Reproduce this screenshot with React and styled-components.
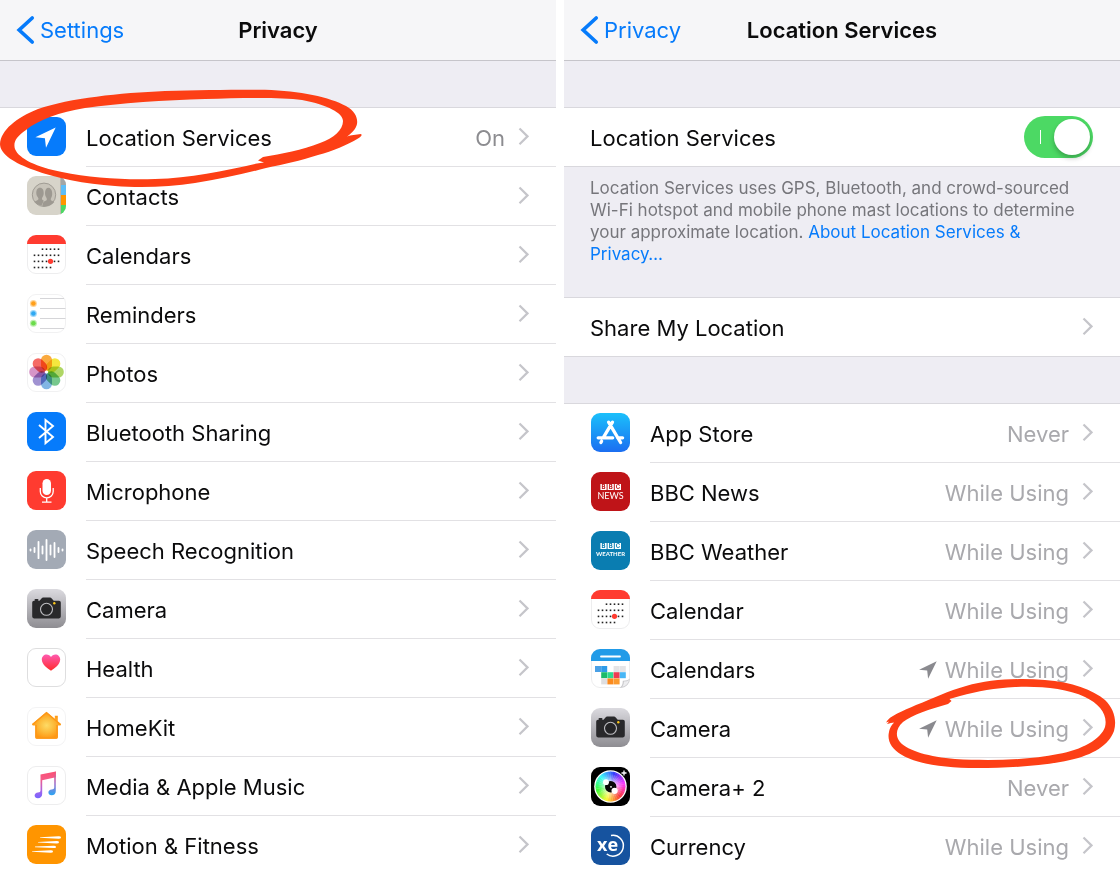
import React from "react";
import styled, { createGlobalStyle } from "styled-components";

const GlobalStyle = createGlobalStyle`
  *, *::before, *::after { box-sizing: border-box; }
  body {
    margin: 0;
    background: #fff;
    color: #0b0b0c;
    font-family: Inter, "Liberation Sans", sans-serif;
    font-size: 22px;
    line-height: 28px;
  }
  ul { list-style: none; margin: 0; padding: 0; }
  p, h1 { margin: 0; }
  a { color: inherit; text-decoration: none; }
`;

const Screens = styled.div`
  display: grid;
  grid-template-columns: 1fr 1fr;
  gap: 8px;
  min-height: 100vh;
  overflow: hidden;
`;

const Panel = styled.section`
  display: flex;
  flex-direction: column;
  min-width: 0;
`;

const NavBar = styled.header`
  display: grid;
  grid-template-columns: 1fr auto 1fr;
  align-items: center;
  height: 61px;
  padding: 0 16px;
  background: #f6f6f8;
  border-bottom: 1px solid #c6c5ca;
`;

const BackLink = styled.a`
  display: flex;
  align-items: center;
  gap: 5px;
  color: #067bfb;
`;

const NavTitle = styled.h1`
  font-size: 22px;
  font-weight: 600;
  line-height: 28px;
`;

const Spacer = styled.div`
  height: 46px;
  background: #eeedf3;
`;

const Group = styled.ul`
  border-top: 1px solid #d9d8dd;
  border-bottom: ${(p) => (p.$open ? "0" : "1px solid #d9d8dd")};
  background: #fff;
`;

const Item = styled.li`
  position: relative;
`;

const rowBase = `
  display: flex;
  height: 59px;
`;

const RowLink = styled.a`
  ${rowBase}
  padding-left: ${(p) => (p.$plain ? 26 : 27)}px;
  li:last-child > & { height: 58px; }
`;

const SwitchRow = styled.label`
  ${rowBase}
  height: 58px;
  padding-left: 26px;
`;

const IconBox = styled.svg`
  flex: none;
  width: 39px;
  height: 39px;
  margin: 9px 20px 0 0;
`;

const RowBody = styled.span`
  display: flex;
  flex: 1;
  align-items: center;
  min-width: 0;
  padding-right: 27px;
  border-bottom: 1px solid #e2e1e4;
  li:last-child & { border-bottom: 0; }
`;

const Label = styled.span`
  flex: 1;
  padding-top: 2px;
  white-space: nowrap;
`;

const Value = styled.span`
  display: flex;
  align-items: center;
  gap: 8px;
  margin-right: 13px;
  padding-top: 2px;
  color: ${(p) => (p.$soft ? "#a9a9ad" : "#8c8c90")};
  white-space: nowrap;
`;

const Switch = styled.input`
  appearance: none;
  position: relative;
  flex: none;
  width: 69px;
  height: 42px;
  margin: 0;
  border-radius: 21px;
  background: #4cd964;
  &::before {
    content: "";
    position: absolute;
    top: 14px;
    left: 16px;
    width: 1px;
    height: 14px;
    background: #fff;
  }
  &::after {
    content: "";
    position: absolute;
    top: 3px;
    right: 3px;
    width: 36px;
    height: 36px;
    border-radius: 50%;
    background: #fff;
    box-shadow: 0 3px 5px rgba(0, 0, 0, 0.25);
  }
  &:not(:checked) { background: #d1d1d6; }
  &:not(:checked)::after { right: 30px; }
`;

const Note = styled.p`
  height: 130px;
  padding: 10px 26px 0;
  background: #eeedf3;
  color: #76767b;
  font-size: 17px;
  line-height: 22px;
  a { color: #067bfb; }
`;

const Mark = styled.svg`
  position: absolute;
  z-index: 1;
  pointer-events: none;
  fill: #fd3f15;
  overflow: visible;
`;

const LeftMark = styled(Mark)`
  top: -20px;
  left: 0;
`;

const RightMark = styled(Mark)`
  top: -24px;
  right: 0;
`;

const BackArrow = () => (
  <svg width="19" height="30" viewBox="0 0 19 30" fill="none" aria-hidden="true">
    <path d="M16.2 3 3.2 15l13 12" stroke="#067bfb" strokeWidth="3.700" strokeLinecap="round" />
  </svg>
);

const Chevron = () => (
  <svg width="11" height="20" viewBox="0 0 11 20" fill="none" aria-hidden="true">
    <path d="M1.5 1.5 9.5 9.4 1.5 17.3" stroke="#c5c5ca" strokeWidth="2.2" />
  </svg>
);

const SmallArrow = () => (
  <svg width="18" height="18" viewBox="0 0 18 18" aria-hidden="true">
    <path d="M17.7.2.1 8.7l8.1.9.9 8.2z" fill="#8a8a8f" />
  </svg>
);

const White = ({ stroke = "#ededee" }) => (
  <rect x=".5" y=".5" width="38" height="38" rx="8.5" fill="#fff" stroke={stroke} />
);
const Tile = ({ fill }) => <rect width="39" height="39" rx="9" fill={fill} />;

const LocationIcon = () => (
  <>
    <Tile fill="#067bfb" />
    <path d="M28.7 10.4 8.4 20.2l9.5 1 1.1 9.6z" fill="#fff" />
  </>
);

const ContactsIcon = () => (
  <>
    <clipPath id="contactsClip"><rect width="39" height="39" rx="9" /></clipPath>
    <g clipPath="url(#contactsClip)">
      <rect width="39" height="39" fill="#d7d4ca" />
      <path d="M34 0h5v9h-5z" fill="#a3a6a5" />
      <path d="M34 9h5v10h-5z" fill="#5dbdf7" />
      <path d="M34 19h5v10h-5z" fill="#ff9500" />
      <path d="M34 29h5v10h-5z" fill="#4cd964" />
      <path d="M33 0h1v39h-1z" fill="#bbb7ad" />
    </g>
    <circle cx="17" cy="18.8" r="11.7" fill="#c8c4ba" stroke="#a09c94" strokeWidth="1" />
    <g fill="#9d9991">
      <path d="M7.500 26c1.500-1.600 3.800-1.600 4-3 .2-1.500-2.200-2.500-2.200-6 0-3 1-5.300 3.700-5.300s3.700 2.300 3.700 5.300c0 3.500-1.900 4.500-1.700 6 .1.900.9 1.200 1.800 1.700l-2.300 4.800c-2.800-.3-5.200-1.500-7-3.500z" />
      <path d="M15.500 30c0-3.700 1.500-4.500 3.200-5.200 1.600-.6 1.400-2.300.3-3.800-1.500-2-1.600-9.300 2.400-9.300s4.500 7 3.200 9.300c-1 1.700-1.300 3.200.2 3.800l2.500 1.200c-2.400 3.400-6.900 4.800-11.800 4z" />
    </g>
  </>
);

const calendarRows = [
  [15, 19, 23, 27, 31],
  [7, 11, 15, 19, 23, 27, 31],
  [7, 11, 15, 19, 27, 31],
  [7, 11, 15, 19, 23],
];

const CalendarIcon = () => (
  <>
    <White />
    <path d="M0 9a9 9 0 0 1 9-9h21a9 9 0 0 1 9 9z" fill="#ff3b30" />
    {calendarRows.map((xs, row) =>
      xs.map((x) => (
        <rect key={`${row}-${x}`} x={x - 0.3} y={13.4 + row * 6.1} width="1.6" height="1.6" fill="#222" />
      ))
    )}
    <circle cx="23.500" cy="26.300" r="2.600" fill="#ff3b30" />
  </>
);

const RemindersIcon = () => (
  <>
    <White stroke="#f1f1f2" />
    <path d="M13 4.500h24M13 14.500h25.500M13 24.500h25.500M13 34.500h24" stroke="#d5d5d8" />
    {[["#ff9f1a", 9.5], ["#30a9f2", 19.5], ["#6bdc4b", 29.3]].map(([color, y]) => (
      <g key={color} fill={color}>
        <circle cx="6.400" cy={y} r="3.500" opacity=".45" />
        <circle cx="6.400" cy={y} r="2.300" />
      </g>
    ))}
  </>
);

const petals = ["#f99b1d", "#f2e31c", "#a1cf4a", "#5fbf79", "#6ba8e0", "#8f7fc9", "#cf82bd", "#f4504a"];

const PhotosIcon = () => (
  <>
    <White stroke="#f1f1f2" />
    <g style={{ isolation: "isolate" }}>
      {petals.map((color, i) => (
        <rect
          key={color}
          x="14" y="1.700" width="11" height="16" rx="5.500"
          fill={color} opacity=".85"
          transform={`rotate(${i * 45} 19.500 19)`}
          style={{ mixBlendMode: "multiply" }}
        />
      ))}
    </g>
    <circle cx="19.500" cy="19" r="1.300" fill="#fff" />
  </>
);

const BluetoothIcon = () => (
  <>
    <Tile fill="#067bfb" />
    <path d="m12 13 14 12-7.500 6.200V8L26 14 12 26" fill="none" stroke="#fff" strokeWidth="1.900" />
  </>
);

const MicrophoneIcon = () => (
  <>
    <Tile fill="#ff3b30" />
    <rect x="15.500" y="8" width="8.500" height="16" rx="4.250" fill="#fff" />
    <path d="M13.300 17v3.500a6.450 6.450 0 0 0 12.900 0V17M19.700 27v4M15 31.200h9.500" fill="none" stroke="#fff" strokeWidth="1.300" />
  </>
);

const bars = [[3.5, 0.6], [7.5, 2], [11.5, 8.2], [15.5, 3.6], [19.5, 10], [23.5, 4.6], [27.5, 7], [31.5, 2], [35.5, 0.6]];

const SpeechIcon = () => (
  <>
    <Tile fill="#a3aab5" />
    {bars.map(([x, h]) => (
      <path key={x} d={`M${x} ${20 - h}v${h * 2}`} stroke="#fff" strokeWidth="1.800" strokeLinecap="round" />
    ))}
  </>
);

const CameraIcon = () => (
  <>
    <linearGradient id="cameraBack" x2="0" y2="1">
      <stop stopColor="#dbdadf" />
      <stop offset="1" stopColor="#8e8d92" />
    </linearGradient>
    <Tile fill="url(#cameraBack)" />
    <path d="M7 11.800h5.500l2-2.400q.7-.8 1.700-.8h6.800q1 0 1.700.8l2 2.400H32q1.800 0 1.800 1.800v14q0 1.800-1.800 1.800H7q-1.800 0-1.800-1.800v-14q0-1.800 1.800-1.800z" fill="#29292b" />
    <rect x="7.500" y="10" width="4" height="2" rx="1" fill="#29292b" />
    <circle cx="19.500" cy="20.300" r="6" fill="#242426" stroke="#bdbdc1" strokeWidth="1.100" />
    <circle cx="27.300" cy="14.200" r="1.200" fill="#f8c51a" />
  </>
);

const HealthIcon = () => (
  <>
    <linearGradient id="heartFill" x2="0" y2="1">
      <stop stopColor="#ff5ab0" />
      <stop offset="1" stopColor="#ff2b2b" />
    </linearGradient>
    <White stroke="#dededf" />
    <path d="M24 22.800c-3.300-2-9.200-6.100-9.200-11.200 0-3 2.200-5.100 4.800-5.100 1.900 0 3.500 1 4.400 2.600.9-1.600 2.500-2.600 4.400-2.600 2.600 0 4.800 2.100 4.800 5.100 0 5.100-5.900 9.200-9.200 11.200z" fill="url(#heartFill)" />
  </>
);

const HomeIcon = () => (
  <>
    <radialGradient id="homeFill">
      <stop stopColor="#fddb66" />
      <stop offset=".5" stopColor="#fcbc3c" />
      <stop offset="1" stopColor="#ff9712" />
    </radialGradient>
    <White stroke="#f3f3f4" />
    <path d="M19.500 5 5 17.300l.8 1.200h2.500V30q0 1.800 1.800 1.800h19q1.800 0 1.800-1.800V18.500h2.500l.7-1.200-3.300-2.800V8.800h-3V12z" fill="url(#homeFill)" />
    <path d="m5.500 17.500 14-11.800 14 11.800M9 18v12.200q0 .9.900.9h19.200q.9 0 .9-.9V18" fill="none" stroke="#fd9818" strokeWidth="1.500" />
  </>
);

const MusicIcon = () => (
  <>
    <linearGradient id="noteFill" x1="0" y1="0" x2="0" y2="1">
      <stop stopColor="#fb5074" />
      <stop offset=".3" stopColor="#f55c88" />
      <stop offset=".75" stopColor="#a065ed" />
      <stop offset="1" stopColor="#7565ff" />
    </linearGradient>
    <linearGradient id="noteStem" x1="0" y1="0" x2="0" y2="1">
      <stop stopColor="#f9506e" />
      <stop offset=".5" stopColor="#a373cb" />
      <stop offset="1" stopColor="#28a6f5" />
    </linearGradient>
    <White />
    <path d="M13.500 8.600 28.800 5.500v5.800l-13.600 2.900v13.500c0 2.800-1.800 4.600-4.300 4.600-1.900 0-3.300-1.100-3.300-2.700 0-1.800 1.400-2.800 3.400-3.100 1.700-.3 2.500-.6 2.500-2z" fill="url(#noteFill)" />
    <path d="M27.200 6.200 28.800 5.500v19.400c0 2.800-1.700 4.400-4.200 4.400-1.900 0-3.200-1.100-3.200-2.700 0-1.700 1.300-2.700 3.300-3 1.600-.3 2.500-.6 2.500-2z" fill="url(#noteStem)" />
  </>
);

const MotionIcon = () => (
  <>
    <Tile fill="#ff9500" />
    <g fill="#fff">
      <path d="m13 12.200 18.500-.9q2.500-.1 2.500 1.200t-2.500 1.200L13 12.800z" />
      <path d="m11 16.900 18.500-.9q2.500-.1 2.500 1.200t-2.500 1.200L11 17.500z" />
      <path d="m8 21.600 18.500-.9q2.500-.1 2.500 1.200t-2.500 1.200L8 22.200z" />
      <path d="m5 26.200 18.500-.9q2.500-.1 2.500 1.200t-2.500 1.200L5 26.800z" />
    </g>
  </>
);

const AppStoreIcon = () => (
  <>
    <linearGradient id="storeBack" x2="0" y2="1">
      <stop stopColor="#1bc0fb" />
      <stop offset="1" stopColor="#1b6ef1" />
    </linearGradient>
    <Tile fill="url(#storeBack)" />
    <path d="m21.500 9.200-9.200 15.500M10.600 28.200l-.7 1.300M17.600 9.200l12 20.300M7.200 24.800h14.500M26.600 24.800h5" fill="none" stroke="#fff" strokeWidth="3.300" strokeLinecap="round" />
  </>
);

const BbcBlocks = ({ y, color }) => (
  <>
    {["B", "B", "C"].map((letter, i) => (
      <g key={i}>
        <rect x={9.4 + i * 7.2} y={y} width="6.200" height="6" fill="#fff" />
        <text x={12.5 + i * 7.2} y={y + 5.1} fill={color} fontSize="6" fontWeight="700" textAnchor="middle" fontFamily="Inter, sans-serif">
          {letter}
        </text>
      </g>
    ))}
  </>
);

const BbcNewsIcon = () => (
  <>
    <Tile fill="#bf1418" />
    <BbcBlocks y={12} color="#bf1418" />
    <text x="19.500" y="27.300" fill="#fff" fontSize="9" fontWeight="400" textAnchor="middle" fontFamily="Lato, sans-serif">NEWS</text>
  </>
);

const BbcWeatherIcon = () => (
  <>
    <Tile fill="#0a7db1" />
    <BbcBlocks y={12} color="#0a7db1" />
    <text x="19.500" y="25" fill="#fff" fontSize="6" fontWeight="700" textAnchor="middle" fontFamily="Lato, sans-serif">WEATHER</text>
  </>
);

const blocks = [
  [4, 17, "#4aa0e6"], [10.2, 17, "#2d9be8"], [22.6, 17, "#e4e4e6"], [28.8, 17, "#e4e4e6"],
  [10.2, 23.2, "#1dbb6a"], [16.4, 23.2, "#2fd98e"], [22.6, 23.2, "#ef3c52"], [28.8, 23.2, "#48b6f5"],
  [10.2, 29.4, "#dedee0"], [16.4, 29.4, "#fb8a1e"], [22.6, 29.4, "#fb9a2e"],
];

const CalendarsAppIcon = () => (
  <>
    <White />
    <path d="M0 12V9a9 9 0 0 1 9-9h21a9 9 0 0 1 9 9v3z" fill="#219be8" />
    <path d="M10 7.500h19" stroke="#fff" strokeWidth="1.800" strokeLinecap="round" />
    {blocks.map(([x, y, color]) => (
      <rect key={`${x}-${y}`} x={x} y={y} width="6" height="6" fill={color} />
    ))}
    <path d="M38.800 29.500c-1.500 1.700-4 2.300-7 2.200 0 3.600-1 5.800-3.500 7.100H30a9 9 0 0 0 8.800-9z" fill="#c9c9cc" />
    <path d="M38.300 31q-2.500 1.600-5.300 1.600 0 3-1.700 5.400 5-1.200 7-7z" fill="#ededef" />
  </>
);

const wedge = (i, count, r) => {
  const a = (i / count) * Math.PI * 2;
  const b = ((i + 1.15) / count) * Math.PI * 2;
  return `M19.5 19.5L${19.5 + r * Math.cos(a)} ${19.5 + r * Math.sin(a)}A${r} ${r} 0 0 1 ${19.5 + r * Math.cos(b)} ${19.5 + r * Math.sin(b)}z`;
};

const CameraPlusIcon = () => (
  <>
    <radialGradient id="lensGlow">
      <stop offset=".35" stopColor="#fff" stopOpacity=".6" />
      <stop offset=".85" stopColor="#fff" stopOpacity="0" />
    </radialGradient>
    <Tile fill="#000" />
    <circle cx="19.500" cy="19.500" r="16.300" fill="#fff" />
    {Array.from({ length: 36 }, (_, i) => (
      <path key={i} d={wedge(i, 36, 15)} fill={`hsl(${(318 + i * 10) % 360} 95% 60%)`} />
    ))}
    <circle cx="19.500" cy="19.500" r="15" fill="url(#lensGlow)" />
    <circle cx="19.700" cy="19.700" r="5.700" fill="#080808" />
    <circle cx="15" cy="15.200" r="2.900" fill="#fff" />
    <circle cx="23.600" cy="23.800" r="3.100" fill="#fff" />
    <circle cx="20" cy="19.800" r=".9" fill="#fff" />
    <path d="M33 3.500v5M30.500 6h5" stroke="#fff" strokeWidth="1.300" />
  </>
);

const CurrencyIcon = () => (
  <>
    <Tile fill="#16539f" />
    <text x="6" y="24.500" fill="#fff" fontSize="18" fontWeight="700" fontFamily="'Open Sans', sans-serif">xe</text>
    <path d="M20 9.500a10.400 10.400 0 1 1-4.300 18.500" fill="none" stroke="#fff" strokeWidth="1.500" />
  </>
);

const privacyRows = [
  { label: "Location Services", icon: LocationIcon, value: "On", mark: "left" },
  { label: "Contacts", icon: ContactsIcon },
  { label: "Calendars", icon: CalendarIcon },
  { label: "Reminders", icon: RemindersIcon },
  { label: "Photos", icon: PhotosIcon },
  { label: "Bluetooth Sharing", icon: BluetoothIcon },
  { label: "Microphone", icon: MicrophoneIcon },
  { label: "Speech Recognition", icon: SpeechIcon },
  { label: "Camera", icon: CameraIcon },
  { label: "Health", icon: HealthIcon },
  { label: "HomeKit", icon: HomeIcon },
  { label: "Media & Apple Music", icon: MusicIcon },
  { label: "Motion & Fitness", icon: MotionIcon },
];

const appRows = [
  { label: "App Store", icon: AppStoreIcon, value: "Never" },
  { label: "BBC News", icon: BbcNewsIcon, value: "While Using" },
  { label: "BBC Weather", icon: BbcWeatherIcon, value: "While Using" },
  { label: "Calendar", icon: CalendarIcon, value: "While Using" },
  { label: "Calendars", icon: CalendarsAppIcon, value: "While Using", recent: true },
  { label: "Camera", icon: CameraIcon, value: "While Using", recent: true, mark: "right" },
  { label: "Camera+ 2", icon: CameraPlusIcon, value: "Never" },
  { label: "Currency", icon: CurrencyIcon, value: "While Using" },
];

const LeftCircle = () => (
  <LeftMark width="364" height="102" viewBox="0 88 364 102" aria-hidden="true">
    <path
      fillRule="evenodd"
      d="M347 136.500C351 135 356 134.500 361 134Q363 135.500 358 138.500C347 145 333 151 318 155C300 161 284 164 266 168C244 174 220 179 195 183C170 187 140 188 115 186C85 184 55 178 34 170C14 163 0 154 0 144C1 130 16 118 38 109C70 98 120 93 165 91C200 90 235 89.500 265 89.700C300 91 330 97 346 106C355 111 358 118 357 124C356 129 352 133 347 136.500Z
      M343 121C343 113 328 105 302 100C280 97 240 98 205 99C165 100 120 103 85 108C60 112 38 120 26 130C16 137 13 142 15 149C19 159 37 167 62 172C90 178 125 180 155 179C190 178 225 171 257 163.500L264 162.500L258 160.500L263 157C282 154 302 150 320 143C334 138 343 130 343 121Z"
    />
  </LeftMark>
);

const RightCircle = () => (
  <RightMark width="240" height="98" viewBox="880 675 240 98" aria-hidden="true">
    <path
      fillRule="evenodd"
      d="M887 724L889 721.500L886 722.500C889 716 903 711 916 705C934 698 948 691 966 686C990 679 1020 678 1045 680C1072 682 1093 690 1105 700C1114 709 1117 720 1114 731C1109 745 1093 755 1070 760C1043 766 1010 768 977 768C945 768 917 764 902 755C891 749 887 740 889 732C890 727 892 725 894 722.500C892 722.500 890 723.500 887 724Z
      M960 696L949.500 699L951.500 701L948 704C930 709 912 715 903 722C896 728 895 736 900 742C908 751 930 757 955 759C990 761 1030 760 1058 754C1082 750 1101 739 1105 727C1108 715 1100 704 1085 697C1066 688 1040 686 1015 687C995 688 978 691 960 696Z"
    />
  </RightMark>
);

const Row = ({ label, icon: Icon, value, recent, mark, soft }) => (
  <Item>
    <RowLink href="#" $plain={!Icon}>
      {Icon && (
        <IconBox viewBox="0 0 39 39" aria-hidden="true">
          <Icon />
        </IconBox>
      )}
      <RowBody>
        <Label>{label}</Label>
        {value && (
          <Value $soft={soft}>
            {recent && <SmallArrow />}
            {value}
          </Value>
        )}
        <Chevron />
      </RowBody>
    </RowLink>
    {mark === "left" && <LeftCircle />}
    {mark === "right" && <RightCircle />}
  </Item>
);

export default function App() {
  return (
    <>
      <GlobalStyle />
      <Screens>
        <Panel>
          <NavBar>
            <BackLink href="#"><BackArrow />Settings</BackLink>
            <NavTitle>Privacy</NavTitle>
          </NavBar>
          <Spacer />
          <Group $open>
            {privacyRows.map((row) => <Row key={row.label} {...row} />)}
          </Group>
        </Panel>
        <Panel>
          <NavBar>
            <BackLink href="#"><BackArrow />Privacy</BackLink>
            <NavTitle>Location Services</NavTitle>
          </NavBar>
          <Spacer />
          <Group>
            <Item>
              <SwitchRow>
                <RowBody>
                  <Label>Location Services</Label>
                  <Switch type="checkbox" role="switch" defaultChecked />
                </RowBody>
              </SwitchRow>
            </Item>
          </Group>
          <Note>
            Location Services uses GPS, Bluetooth, and crowd-sourced Wi-Fi hotspot and mobile phone mast
            locations to determine your approximate location. <a href="#">About Location Services &amp; Privacy…</a>
          </Note>
          <Group>
            <Row label="Share My Location" />
          </Group>
          <Spacer />
          <Group $open>
            {appRows.map((row) => <Row key={row.label} soft {...row} />)}
          </Group>
        </Panel>
      </Screens>
    </>
  );
}
